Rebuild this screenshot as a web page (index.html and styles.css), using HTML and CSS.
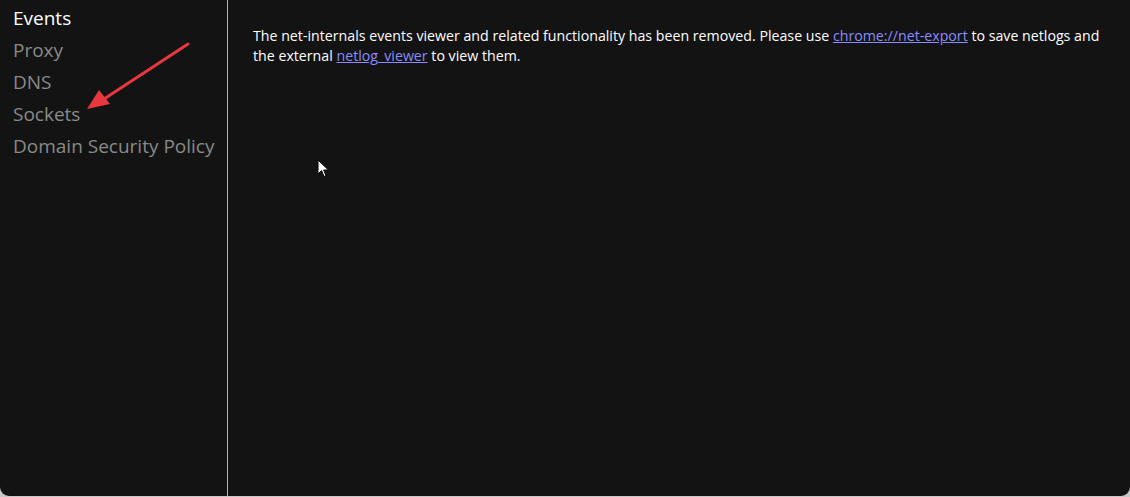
FILE: index.html
```html
<!DOCTYPE html>
<html>
<head>
<meta charset="utf-8">
<link rel="stylesheet" href="styles.css">
</head>
<body>
<div class="window">
  <nav class="sidebar">
    <div class="tab active">Events</div>
    <div class="tab">Proxy</div>
    <div class="tab">DNS</div>
    <div class="tab">Sockets</div>
    <div class="tab">Domain Security Policy</div>
  </nav>
  <main class="content">
    <p class="notice">The net-internals events viewer and related functionality has been removed. Please use <a href="#">chrome://net-export</a> to save netlogs and the external <a href="#">netlog_viewer</a> to view them.</p>
  </main>
  <svg class="arrow" width="120" height="80" viewBox="0 0 120 80">
    <line x1="106" y1="3" x2="22" y2="58" stroke="#e8383d" stroke-width="3" stroke-linecap="round"/>
    <polygon points="5,68 17,49 28,63" fill="#e8383d"/>
  </svg>
  <svg class="cursor" width="14" height="20" viewBox="0 0 14 20">
    <path d="M1 1 L1 15 L4.5 11.5 L7 17.5 L9 16.6 L6.6 11 L11.5 11 Z" fill="#fff" stroke="#000" stroke-width="1"/>
  </svg>
</div>
</body>
</html>
```
FILE: styles.css
```css
html, body {
  margin: 0;
  padding: 0;
  background: #c8c8c8;
}
.window {
  position: relative;
  width: 1130px;
  height: 496px;
  background: #131313;
  border-radius: 0 0 9px 9px;
  display: flex;
  overflow: hidden;
  font-family: "Open Sans", "Noto Sans", sans-serif;
}
.sidebar {
  width: 227px;
  flex: none;
  border-right: 1px solid #b4b4b4;
  padding-top: 2px;
  box-sizing: content-box;
}
.tab {
  font-size: 19px;
  line-height: 32px;
  padding-left: 13px;
  color: #8a8a8a;
  white-space: nowrap;
}
.tab.active {
  color: #ffffff;
}
.content {
  flex: 1;
  padding: 26px 25px 0 25px;
}
.notice {
  margin: 0;
  color: #ffffff;
  font-size: 14.2px;
  line-height: 20px;
}
.notice a {
  color: #8a8cff;
  text-decoration: underline;
}
.arrow {
  position: absolute;
  left: 82px;
  top: 41px;
}
.cursor {
  position: absolute;
  left: 317px;
  top: 159px;
}
```
